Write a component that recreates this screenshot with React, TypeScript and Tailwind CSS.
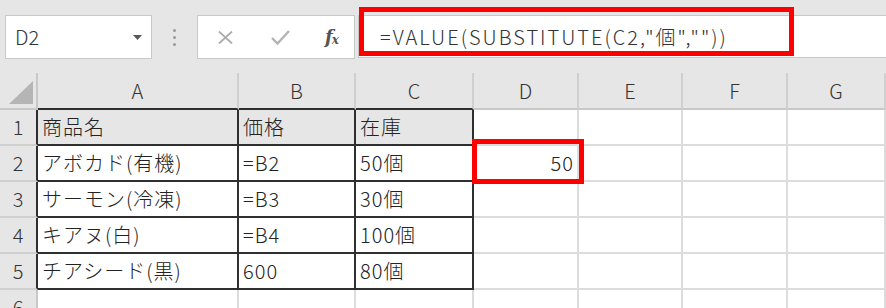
import React from "react";

const cols = ["A", "B", "C", "D", "E", "F", "G"];
const widths = [201, 117, 118, 105, 104, 105, 98];

const data: string[][] = [
  ["商品名", "価格", "在庫", "", "", "", ""],
  ["アボカド(有機)", "=B2", "50個", "50", "", "", ""],
  ["サーモン(冷凍)", "=B3", "30個", "", "", "", ""],
  ["キアヌ(白)", "=B4", "100個", "", "", "", ""],
  ["チアシード(黒)", "600", "80個", "", "", "", ""],
  ["", "", "", "", "", "", ""],
];

export default function App() {
  return (
    <div
      className="relative w-[886px] h-[308px] overflow-hidden bg-white text-[#222]"
      style={{ fontFamily: '"Noto Sans CJK JP", "Noto Sans", sans-serif' }}
    >
      {/* Toolbar */}
      <div className="h-[73px] bg-[#e6e6e6] flex items-start pt-[15px] pl-[5px]">
        <div className="w-[147px] h-[44px] bg-white border border-[#c8c8c8] flex items-center justify-between pl-[9px] pr-[9px]">
          <span className="text-[20px] text-[#333] leading-none font-light">D2</span>
          <svg width="9" height="5" viewBox="0 0 9 5">
            <polygon points="0,0 9,0 4.5,5" fill="#595959" />
          </svg>
        </div>
        <div className="w-[45px] h-[44px] flex flex-col items-center justify-center gap-[4px]">
          <div className="w-[3px] h-[3px] rounded-full bg-[#9a9a9a]" />
          <div className="w-[3px] h-[3px] rounded-full bg-[#9a9a9a]" />
          <div className="w-[3px] h-[3px] rounded-full bg-[#9a9a9a]" />
        </div>
        <div className="w-[158px] h-[44px] bg-white border border-[#c8c8c8] flex items-center">
          <div className="w-[52px] flex justify-center pl-[2px]">
            <svg width="15" height="13" viewBox="0 0 15 13">
              <path d="M1 0.5 L14 12.5 M14 0.5 L1 12.5" stroke="#ababab" strokeWidth="1.8" fill="none" />
            </svg>
          </div>
          <div className="w-[60px] flex justify-center">
            <svg width="19" height="15" viewBox="0 0 19 15">
              <path d="M1 8 L6.5 13.5 L18 1" stroke="#b3b3b3" strokeWidth="2.4" fill="none" />
            </svg>
          </div>
          <div className="w-[44px] flex justify-center items-end">
            <span
              className="italic font-bold text-[#555] text-[18px] leading-none"
              style={{ fontFamily: '"DejaVu Serif", "Liberation Serif", serif' }}
            >
              f
            </span>
            <span
              className="italic font-bold text-[#555] text-[12px] leading-none -ml-[1px]"
              style={{ fontFamily: '"DejaVu Serif", "Liberation Serif", serif' }}
            >
              x
            </span>
          </div>
        </div>
        <div className="flex-1 ml-[3px] h-[43px] bg-white border-y border-l border-[#c8c8c8] flex items-center pl-[21px]">
          <span className="text-[20px] text-[#333] leading-none whitespace-nowrap tracking-[2px] font-light">
            =VALUE(SUBSTITUTE(C2,"個",""))
          </span>
        </div>
      </div>

      {/* Sheet grid */}
      <div
        className="grid"
        style={{ gridTemplateColumns: `38px ${widths.map((w) => w + "px").join(" ")}` }}
      >
        {/* header row */}
        <div className="h-[37px] bg-[#e6e6e6] border-r-2 border-b-2 border-[#c8c8c8] relative">
          <svg className="absolute left-[9px] top-[8px]" width="24" height="23" viewBox="0 0 24 23">
            <polygon points="0,23 24,23 24,0" fill="#b5b5b5" />
          </svg>
        </div>
        {cols.map((c, i) => (
          <div
            key={c}
            className={`h-[37px] bg-[#e6e6e6] border-r-2 border-b-2 flex items-center justify-center text-[20px] text-[#333] font-light border-r-[#d0d0d0] ${
              i < 3 ? "border-b-[#2f2f2f]" : "border-b-[#c8c8c8]"
            }`}
          >
            {c}
          </div>
        ))}
        {data.map((row, r) => (
          <React.Fragment key={r}>
            <div
              className={`h-[36px] bg-[#e6e6e6] border-r-2 border-b-2 border-b-[#d0d0d0] flex items-center justify-center text-[20px] text-[#333] font-light ${
                r < 5 ? "border-r-[#2f2f2f]" : "border-r-[#c8c8c8]"
              }`}
            >
              {r + 1}
            </div>
            {row.map((v, c) => {
              const inTable = r < 5 && c < 3;
              const isHead = r === 0 && c < 3;
              const isNum = r === 1 && c === 3;
              return (
                <div
                  key={c}
                  className={`h-[36px] border-r-2 border-b-2 flex items-center text-[20px] font-light tracking-[1px] whitespace-nowrap overflow-hidden ${
                    inTable ? "border-[#2f2f2f]" : "border-[#dcdcdc]"
                  } ${isHead ? "bg-[#e7e6e6]" : "bg-white"} ${
                    isNum ? "justify-end pr-[3px]" : "pl-[4px]"
                  } ${r === 0 && c === 3 ? "border-b-[#dcdcdc]" : ""}`}
                >
                  {v}
                </div>
              );
            })}
          </React.Fragment>
        ))}
      </div>

      {/* Red highlight boxes */}
      <div className="absolute left-[359px] top-[7px] w-[435px] h-[49px] border-[5px] border-[#ff0000]" />
      <div className="absolute left-[472px] top-[139px] w-[112px] h-[45px] border-[5px] border-[#ff0000]" />
    </div>
  );
}
